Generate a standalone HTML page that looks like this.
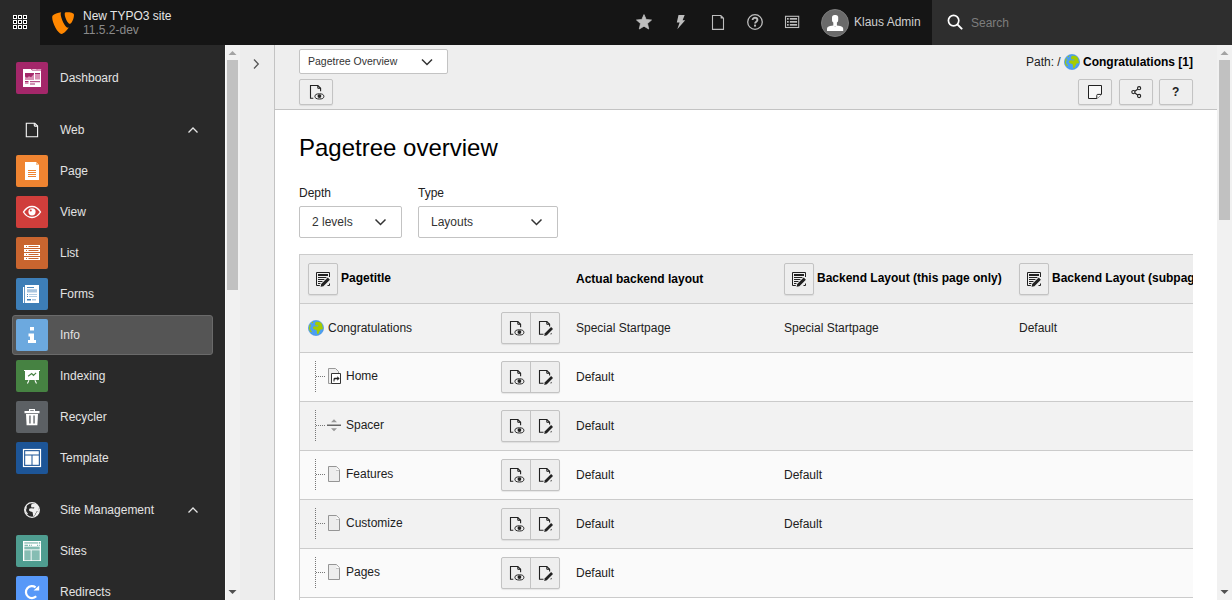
<!DOCTYPE html>
<html><head><meta charset="utf-8">
<style>
*{box-sizing:border-box;margin:0;padding:0}
html,body{width:1232px;height:600px;overflow:hidden;background:#fff}
body{font-family:"Liberation Sans",sans-serif;font-size:12px;color:#212121;position:relative}
.abs{position:absolute}
#topbar{left:0;top:0;width:1232px;height:45px;background:#151515}
#gridbtn{left:0;top:0;width:40px;height:45px;background:#292929}
#sitename{left:83px;top:9px;color:#e6e6e6;font-size:12px;line-height:15px}
#siteversion{left:83px;top:23px;color:#8a8a8a;font-size:12px;line-height:15px}
.tbicon{position:absolute;top:14px;width:16px;height:16px}
#user{left:854px;top:15px;color:#cfcfcf;font-size:12px;line-height:15px}
#avatar{left:821px;top:9px;width:28px;height:28px}
#search{left:932px;top:0;width:300px;height:45px;background:#2e2e2e}
#searchtxt{left:971px;top:16px;color:#7d7d7d;font-size:12px;line-height:15px}
#sidebar{left:0;top:45px;width:225px;height:555px;background:#292929}
.mi{position:absolute;left:16px;width:32px;height:32px;border-radius:2px}
.ml{position:absolute;left:60px;color:#e3e3e3;font-size:12px;line-height:15px}
#sbscroll{left:225px;top:45px;width:15px;height:555px;background:#f1f1f1}
#tree{left:240px;top:45px;width:35px;height:555px;background:#ededed;border-right:1px solid #c3c3c3}
#docheader{left:275px;top:45px;width:942px;height:65px;background:#eeeeee;border-bottom:1px solid #c3c3c3}
#rscroll{left:1217px;top:45px;width:15px;height:555px;background:#f1f1f1}
.btn{position:absolute;background:#eeeeee;border:1px solid #c3c3c3;border-radius:2px;box-shadow:0 1px 1px rgba(0,0,0,.08)}
.sel{position:absolute;background:#fff;border:1px solid #c3c3c3;border-radius:2px}
.seltxt{position:absolute;color:#333;line-height:15px}
#h1{left:299px;top:134px;font-size:24px;line-height:28px;color:#000}
.lbl{position:absolute;top:186px;color:#212121;font-size:12px;line-height:15px}
#table{left:299px;top:254px;width:918px;height:346px;overflow:hidden}
.row{position:absolute;left:0;width:894px;height:49px;border-top:1px solid #c8c8c8}
.cell{position:absolute;line-height:15px;white-space:nowrap}
</style></head>
<body>
<div id="topbar" class="abs"></div>
<div id="gridbtn" class="abs">
 <svg class="abs" style="left:13px;top:15px" width="14" height="14" viewBox="0 0 14 14"><rect x="0.5" y="0.5" width="3" height="3" fill="#000" stroke="#fff" stroke-width="1"/><rect x="5.5" y="0.5" width="3" height="3" fill="#000" stroke="#fff" stroke-width="1"/><rect x="10.5" y="0.5" width="3" height="3" fill="#000" stroke="#fff" stroke-width="1"/><rect x="0.5" y="5.5" width="3" height="3" fill="#000" stroke="#fff" stroke-width="1"/><rect x="5.5" y="5.5" width="3" height="3" fill="#000" stroke="#fff" stroke-width="1"/><rect x="10.5" y="5.5" width="3" height="3" fill="#000" stroke="#fff" stroke-width="1"/><rect x="0.5" y="10.5" width="3" height="3" fill="#000" stroke="#fff" stroke-width="1"/><rect x="5.5" y="10.5" width="3" height="3" fill="#000" stroke="#fff" stroke-width="1"/><rect x="10.5" y="10.5" width="3" height="3" fill="#000" stroke="#fff" stroke-width="1"/></svg>
</div>
<!-- TYPO3 logo -->
<svg class="abs" style="left:52px;top:12px" width="22" height="22" viewBox="0 0 23 23">
 <path fill="#ff8700" d="M17.5 16.3c-.3.1-.6.1-1 .1-3 0-7.4-10.5-7.4-14 0-1.3.3-1.7.7-2.1C6.1.8 2 2 .7 3.7.4 4.1.2 4.8.2 5.7c0 5.5 5.9 17.2 9.9 17.2 1.9 0 5-3.1 7.4-6.6"/>
 <path fill="#ff8700" d="M15.6.2c3.7 0 7.4.6 7.4 2.7 0 4.3-2.7 9.5-4.1 9.5-2.5 0-5.6-6.9-5.6-10.4 0-1.6.6-1.8 2.3-1.8"/>
</svg>
<div id="sitename" class="abs">New TYPO3 site</div>
<div id="siteversion" class="abs">11.5.2-dev</div>

<!-- toolbar icons -->
<svg class="abs" style="left:636px;top:14px" width="16" height="16" viewBox="0 0 16 16"><path fill="#bdbdbd" stroke="#bdbdbd" stroke-width="0.8" stroke-linejoin="round" d="M8 .6l2.2 4.9 5.3.5-4 3.6 1.2 5.4L8 12.2 3.3 15l1.2-5.4-4-3.6 5.3-.5z"/></svg>
<svg class="abs" style="left:676px;top:14px" width="10" height="16" viewBox="0 0 10 16"><path fill="#bdbdbd" d="M2.5 1h6.2L6.6 6.2h2.6L1.3 15.3 3.6 8.4H.8z"/></svg>
<svg class="abs" style="left:711px;top:14px" width="14" height="16" viewBox="0 0 14 16"><path fill="none" stroke="#bdbdbd" stroke-width="1.1" d="M1.5 1.5h8.3l2.7 2.7v11.2H1.5z"/><path fill="#bdbdbd" d="M9.6 1.2v3.2h3.2z"/></svg>
<svg class="abs" style="left:747px;top:14px" width="16" height="16" viewBox="0 0 16 16"><circle cx="8" cy="8" r="7.3" fill="none" stroke="#bdbdbd" stroke-width="1.3"/><path fill="none" stroke="#bdbdbd" stroke-width="1.9" d="M5.6 6.1c0-1.5 1.1-2.3 2.4-2.3 1.4 0 2.4.8 2.4 2.1 0 1.9-2.3 1.7-2.3 3.7"/><rect x="7.05" y="10.6" width="2" height="2" fill="#bdbdbd"/></svg>
<svg class="abs" style="left:784px;top:15px" width="16" height="14" viewBox="0 0 16 14"><rect x="1.5" y="1.3" width="13.2" height="11.2" fill="none" stroke="#bdbdbd" stroke-width="1.1"/><rect x="3" y="3" width="1.7" height="1.7" fill="#bdbdbd"/><rect x="3" y="6" width="1.7" height="1.7" fill="#bdbdbd"/><rect x="3" y="9" width="1.7" height="1.7" fill="#bdbdbd"/><rect x="5.8" y="3" width="7.3" height="1.7" fill="#bdbdbd"/><rect x="5.8" y="6" width="7.3" height="1.7" fill="#bdbdbd"/><rect x="5.8" y="9" width="7.3" height="1.7" fill="#bdbdbd"/></svg>
<div id="avatar" class="abs"><svg width="28" height="28" viewBox="0 0 28 28"><circle cx="14" cy="14" r="13.5" fill="#6a6a6a" stroke="#7c7c7c" stroke-width="1"/><rect x="11" y="6" width="6.2" height="7.6" rx="2.6" fill="#fff"/><rect x="12.3" y="12" width="3.6" height="5" fill="#fff"/><path fill="#fff" d="M6 22v-2.3c0-1.5 1.2-2.3 3-2.7l3.4-.6 1.7 1.2 1.7-1.2 3.4.6c1.8.4 3 1.2 3 2.7V22z"/></svg></div>
<div id="user" class="abs">Klaus Admin</div>
<div id="search" class="abs"></div>
<svg class="abs" style="left:947px;top:14px" width="16" height="16" viewBox="0 0 16 16"><circle cx="6.6" cy="6.6" r="5.2" fill="none" stroke="#fff" stroke-width="1.7"/><path stroke="#fff" stroke-width="2" stroke-linecap="round" d="M10.6 10.6l4 4"/></svg>
<div id="searchtxt" class="abs">Search</div>

<div id="sidebar" class="abs"></div>
<div class="mi" style="top:62px;background:#a4276a"><svg width="32" height="32" viewBox="0 0 32 32"><path fill="#fff" d="M7 7h8l1 1.5h9V25H7z"/><rect x="16.2" y="7" width="4.5" height="0.9" fill="#f3d5e4"/><rect x="21.2" y="7" width="4" height="0.9" fill="#e0a9c5"/><path fill="#a4276a" d="M9 11h9v6.5H9z"/><path fill="#d88fb4" d="M9 14.5l2 1.2 2-1.5 2 1 3-3.2v5.5H9z"/><rect x="19" y="11" width="5" height="6.5" fill="#d88fb4"/><rect x="19" y="11" width="5" height="1" fill="#a4276a"/><rect x="9" y="19" width="3.5" height="1" fill="#a4276a"/><rect x="9" y="20" width="3.5" height="2" fill="#d88fb4"/><rect x="14" y="19.2" width="10" height="1" fill="#a4276a"/><rect x="14" y="21.5" width="5" height="1" fill="#a4276a"/></svg></div><div class="ml" style="top:71px">Dashboard</div>
<svg class="abs" style="left:25px;top:122px" width="14" height="16" viewBox="0 0 14 16"><path fill="none" stroke="#fafafa" stroke-width="1.1" d="M1.3 1.3h8.5l2.8 2.8v10.6H1.3z"/><path fill="none" stroke="#fafafa" stroke-width="1.1" d="M9.3 1.3v2.2c0 .4.2.6.6.6h2.4"/></svg><div class="ml" style="top:123px">Web</div><svg class="abs" style="left:187px;top:126px" width="12" height="8" viewBox="0 0 12 8"><path fill="none" stroke="#e6e6e6" stroke-width="1.3" d="M1.5 6.5L6 2l4.5 4.5"/></svg>
<div class="mi" style="top:155px;background:#ef8431"><svg width="32" height="32" viewBox="0 0 32 32"><path fill="#fff" d="M9 7h11l3 3v15H9z"/><path fill="#f6c191" d="M20 7v3h3z"/><g fill="#ef8431"><rect x="12" y="15" width="8" height="1"/><rect x="12" y="17" width="8" height="1"/><rect x="12" y="19" width="8" height="1"/><rect x="12" y="21" width="8" height="1"/></g></svg></div><div class="ml" style="top:164px">Page</div>
<div class="mi" style="top:196px;background:#d03e3b"><svg width="32" height="32" viewBox="0 0 32 32"><path fill="none" stroke="#fff" stroke-width="1.4" d="M7.5 16c2.3-3.7 5.3-5.5 8.5-5.5s6.2 1.8 8.5 5.5c-2.3 3.7-5.3 5.5-8.5 5.5s-6.2-1.8-8.5-5.5z"/><circle cx="16" cy="15.8" r="3.6" fill="#fff"/><circle cx="14.8" cy="14.6" r="1" fill="#d03e3b"/></svg></div><div class="ml" style="top:205px">View</div>
<div class="mi" style="top:237px;background:#c9652f"><svg width="32" height="32" viewBox="0 0 32 32"><rect x="8" y="8" width="16" height="3" fill="#fff"/><rect x="10" y="9" width="1" height="1" fill="#c9652f"/><rect x="12.5" y="9" width="10" height="1" fill="#c9652f"/><rect x="8" y="12" width="16" height="3" fill="#fff"/><rect x="10" y="13" width="1" height="1" fill="#c9652f"/><rect x="12.5" y="13" width="10" height="1" fill="#c9652f"/><rect x="8" y="16" width="16" height="3" fill="#fff"/><rect x="10" y="17" width="1" height="1" fill="#c9652f"/><rect x="12.5" y="17" width="10" height="1" fill="#c9652f"/><rect x="8" y="20" width="16" height="3" fill="#fff"/><rect x="10" y="21" width="1" height="1" fill="#c9652f"/><rect x="12.5" y="21" width="10" height="1" fill="#c9652f"/></svg></div><div class="ml" style="top:246px">List</div>
<div class="mi" style="top:278px;background:#3d7eb7"><svg width="32" height="32" viewBox="0 0 32 32"><rect x="7" y="9" width="1.2" height="16" fill="#fff"/><rect x="9" y="7" width="14" height="18" fill="#fff"/><g fill="#3d7eb7"><rect x="11" y="9" width="7" height="0.9"/><rect x="11" y="11.2" width="10" height="3.3" opacity=".45"/><rect x="11" y="16" width="1" height="0.9"/><rect x="13" y="16" width="8" height="0.9" opacity=".45"/><rect x="11" y="18.1" width="1" height="0.9"/><rect x="13" y="18.1" width="8" height="0.9" opacity=".45"/><rect x="11" y="21" width="4" height="1.5"/><rect x="16" y="21" width="4" height="1.5" opacity=".45"/></g></svg></div><div class="ml" style="top:287px">Forms</div>
<div class="abs" style="left:12px;top:315px;width:201px;height:40px;background:#555;border:1px solid #6a6a6a;border-radius:3px"></div><div class="mi" style="top:319px;background:#6ca9df"><svg width="32" height="32" viewBox="0 0 32 32"><rect x="14" y="8" width="4" height="3.5" fill="#fff"/><path fill="#fff" d="M12.5 14.5h5.5v6.5h2V24h-8v-3h2v-3.5h-1.5z"/></svg></div><div class="ml" style="top:328px">Info</div>
<div class="mi" style="top:360px;background:#468242"><svg width="32" height="32" viewBox="0 0 32 32"><rect x="8" y="10" width="16" height="1" fill="#fff"/><rect x="9" y="10.5" width="14" height="9.5" fill="#fff"/><path fill="none" stroke="#468242" stroke-width="1.1" d="M12.1 16.3l3.6-2.8 1.8 1.9 2.6-2.5"/><path fill="none" stroke="#fff" stroke-width="1.1" d="M13 20.3l-1.6 3.3M18.9 20.3l1.6 3.3"/></svg></div><div class="ml" style="top:369px">Indexing</div>
<div class="mi" style="top:401px;background:#5c6064"><svg width="32" height="32" viewBox="0 0 32 32"><path fill="#fff" d="M13 8h6v2h4.5v2.3h-15V10H13zM14.2 9.2v.8h3.6v-.8z"/><path fill="#fff" d="M10 13h12l-.6 11.3H10.6z"/><rect x="13.3" y="14.5" width="1.3" height="8" fill="#5c6064"/><rect x="17.4" y="14.5" width="1.3" height="8" fill="#5c6064"/></svg></div><div class="ml" style="top:410px">Recycler</div>
<div class="mi" style="top:442px;background:#1d5597"><svg width="32" height="32" viewBox="0 0 32 32"><rect x="7.5" y="7.5" width="17" height="17" fill="none" stroke="#fff" stroke-width="1.2"/><rect x="9.2" y="9.2" width="13.6" height="3.3" fill="#fff"/><rect x="9.2" y="13.5" width="6.3" height="9.3" fill="#fff"/><rect x="16.5" y="13.5" width="6.3" height="9.3" fill="#fff"/></svg></div><div class="ml" style="top:451px">Template</div>
<svg class="abs" style="left:24px;top:502px" width="16" height="16" viewBox="0 0 16 16"><circle cx="8" cy="8" r="7.3" fill="#292929" stroke="#f0f0f0" stroke-width="1.3"/><path fill="#f0f0f0" d="M7.5 2.2C9 1.5 11.5 1.7 13 2.8l1.2 1.7.3 2.5.6 1.6-1 1-1.3-.4-1.3 2.4-1.3 2.7-1-.3-.4-2.5-.3-1.5-2-.5L5 8.5l.2-1.7 1.8-.6 3 .2.3-1.1-2.8.1L7 4z"/><path fill="#f0f0f0" d="M1.4 5l1.4-.8-.2 2.3L2 8l.5 2 1.3 1.2-.3 1.3-1.5-1L1 9z"/><path fill="#f0f0f0" d="M10 15l2.5-4.5 1.5-1.5 1.2.5-1.5 3.5z"/></svg><div class="ml" style="top:503px">Site Management</div><svg class="abs" style="left:187px;top:506px" width="12" height="8" viewBox="0 0 12 8"><path fill="none" stroke="#e6e6e6" stroke-width="1.3" d="M1.5 6.5L6 2l4.5 4.5"/></svg>
<div class="mi" style="top:535px;background:#4f9d90"><svg width="32" height="32" viewBox="0 0 32 32"><rect x="7" y="6" width="18" height="20" fill="#fff"/><rect x="8.3" y="7.5" width="14" height="0.9" fill="#4f9d90"/><rect x="23" y="7.3" width="1.2" height="1.2" fill="#4f9d90"/><rect x="8.5" y="9.8" width="3.5" height="0.9" fill="#4f9d90"/><rect x="13" y="9.8" width="1" height="0.9" fill="#4f9d90"/><rect x="14.8" y="9.8" width="1" height="0.9" fill="#4f9d90"/><rect x="21" y="9.8" width="1" height="0.9" fill="#4f9d90"/><rect x="22.8" y="9.8" width="1" height="0.9" fill="#4f9d90"/><rect x="8.3" y="11.6" width="15.4" height="2.8" fill="#86bdb3"/><rect x="8.3" y="15.3" width="6.4" height="10" fill="#86bdb3"/><rect x="15.6" y="15.3" width="8.1" height="10" fill="#86bdb3"/></svg></div><div class="ml" style="top:544px">Sites</div>
<div class="mi" style="top:576px;background:#5798f8"><svg width="32" height="32" viewBox="0 0 32 32"><path fill="none" stroke="#fff" stroke-width="2.2" d="M19.6 11.3A6 6 0 1 0 20.2 20.3"/><path fill="#fff" d="M17.6 14.6h5.6V9.4z"/></svg></div><div class="ml" style="top:585px">Redirects</div>

<div id="sbscroll" class="abs"><div class="abs" style="left:0;top:0;width:1px;height:555px;background:#f8f8f8"></div><div class="abs" style="left:2px;top:15px;width:11px;height:230px;background:#c1c1c1"></div>
<svg class="abs" style="left:3px;top:5px" width="9" height="6" viewBox="0 0 9 6"><path fill="#a3a3a3" d="M4.5 1L8.5 5h-8z"/></svg>
<svg class="abs" style="left:3px;top:544px" width="9" height="6" viewBox="0 0 9 6"><path fill="#505050" d="M.5 1h8l-4 4z"/></svg></div>
<div id="tree" class="abs"><svg class="abs" style="left:12px;top:13px" width="8" height="12" viewBox="0 0 8 12"><path fill="none" stroke="#555" stroke-width="1.3" d="M2 1.5L6.3 6 2 10.5"/></svg></div>
<div id="docheader" class="abs"></div>
<div id="rscroll" class="abs"><div class="abs" style="left:2px;top:15px;width:11px;height:160px;background:#c1c1c1"></div>
<svg class="abs" style="left:3px;top:5px" width="9" height="6" viewBox="0 0 9 6"><path fill="#a3a3a3" d="M4.5 1L8.5 5h-8z"/></svg>
<svg class="abs" style="left:3px;top:544px" width="9" height="6" viewBox="0 0 9 6"><path fill="#505050" d="M.5 1h8l-4 4z"/></svg></div>
<!-- docheader content -->
<div class="sel" style="left:299px;top:49px;width:149px;height:25px"></div>
<div class="seltxt" style="left:308px;top:54px;font-size:10.5px">Pagetree Overview</div>
<svg class="abs" style="left:421px;top:57px" width="12" height="10" viewBox="0 0 12 10"><path fill="none" stroke="#333" stroke-width="1.5" d="M1 2.5l5 5 5-5"/></svg>
<div class="btn" style="left:299px;top:79px;width:34px;height:26px"></div>
<div class="abs" style="left:309px;top:84px;width:16px;height:16px"><svg width="16" height="16" viewBox="0 0 16 16"><path fill="none" stroke="#212121" stroke-width="1.1" d="M4.3 14.3H1.5V1.5h7.3l2.8 2.8v2.9"/><path fill="none" stroke="#212121" stroke-width="1" d="M8.8 1.5v2.8h2.8"/><ellipse cx="10.4" cy="12.4" rx="4.5" ry="2.6" fill="none" stroke="#212121" stroke-width="1"/><circle cx="10.4" cy="12.1" r="1.9" fill="#212121"/></svg></div>
<div class="abs" style="left:1026px;top:55px;line-height:15px;color:#212121">Path: /</div>
<svg class="abs" style="left:1064px;top:54px" width="16" height="16" viewBox="0 0 16 16"><circle cx="8" cy="8" r="7.6" fill="#4c9ff2" stroke="#3f8ddf" stroke-width=".6"/><path fill="#a5cc00" d="M7.5 2.2C9 1.5 11.5 1.7 13 2.8l1.2 1.7.3 2.5.6 1.6-1 1-1.3-.4-1.3 2.4-1.3 2.7-1-.3-.4-2.5-.3-1.5-2-.5L5 8.5l.2-1.7 1.8-.6 3 .2.3-1.1-2.8.1L7 4z"/><path fill="#a5cc00" d="M1.4 5l1.4-.8-.2 2.3L2 8l.5 2 1.3 1.2-.3 1.3-1.5-1L1 9z"/><circle cx="4.4" cy="2.5" r=".7" fill="#a5cc00"/></svg>
<div class="abs" style="left:1083px;top:55px;line-height:15px;color:#000;font-weight:bold">Congratulations [1]</div>
<div class="btn" style="left:1078px;top:79px;width:34px;height:26px"></div>
<svg class="abs" style="left:1087px;top:84px" width="16" height="16" viewBox="0 0 16 16"><path fill="#f8f8f8" stroke="#212121" stroke-width="1" d="M1.5 1.5h13v8.5l-4.5 4.5H1.5z"/><path fill="#fff" stroke="#212121" stroke-width="1" d="M9.8 14.4v-3.1c0-.6.3-.9.9-.9h3.7"/></svg>
<div class="btn" style="left:1119px;top:79px;width:34px;height:26px"></div>
<svg class="abs" style="left:1128px;top:84px" width="16" height="16" viewBox="0 0 16 16"><circle cx="11.1" cy="4.2" r="1.6" fill="none" stroke="#212121" stroke-width="1.1"/><circle cx="5.4" cy="8.1" r="1.6" fill="none" stroke="#212121" stroke-width="1.1"/><circle cx="11.1" cy="12" r="1.6" fill="none" stroke="#212121" stroke-width="1.1"/><path stroke="#212121" stroke-width="1.1" d="M6.8 7.2l2.9-2M6.8 9l2.9 2"/></svg>
<div class="btn" style="left:1159px;top:79px;width:34px;height:26px"></div>
<div class="abs" style="left:1172px;top:85px;line-height:15px;color:#212121;font-weight:bold;font-size:12px">?</div>
<!-- module body -->
<div id="h1" class="abs">Pagetree overview</div>
<div class="lbl" style="left:299px">Depth</div>
<div class="lbl" style="left:418px">Type</div>
<div class="sel" style="left:299px;top:206px;width:103px;height:32px"></div>
<div class="seltxt" style="left:312px;top:215px;font-size:12px">2 levels</div>
<svg class="abs" style="left:374px;top:217px" width="13" height="10" viewBox="0 0 13 10"><path fill="none" stroke="#333" stroke-width="1.5" d="M1.5 2.5l5 5 5-5"/></svg>
<div class="sel" style="left:418px;top:206px;width:140px;height:32px"></div>
<div class="seltxt" style="left:431px;top:215px;font-size:12px">Layouts</div>
<svg class="abs" style="left:530px;top:217px" width="13" height="10" viewBox="0 0 13 10"><path fill="none" stroke="#333" stroke-width="1.5" d="M1.5 2.5l5 5 5-5"/></svg>
<div class="abs" style="left:299px;top:254px;width:1px;height:346px;background:#ccc"></div><div class="abs" style="left:299px;top:254px;width:894px;height:1px;background:#ccc"></div>
<div class="abs" style="left:300px;top:255px;width:893px;height:48px;background:#ededed"></div>
<div class="abs" style="left:300px;top:303px;width:893px;height:1px;background:#cbcbcb"></div>
<div class="abs" style="left:300px;top:304px;width:893px;height:48px;background:#f2f2f2"></div>
<div class="abs" style="left:300px;top:352px;width:893px;height:1px;background:#cbcbcb"></div>
<div class="abs" style="left:300px;top:353px;width:893px;height:48px;background:#fafafa"></div>
<div class="abs" style="left:300px;top:401px;width:893px;height:1px;background:#cbcbcb"></div>
<div class="abs" style="left:300px;top:402px;width:893px;height:48px;background:#f2f2f2"></div>
<div class="abs" style="left:300px;top:450px;width:893px;height:1px;background:#cbcbcb"></div>
<div class="abs" style="left:300px;top:451px;width:893px;height:48px;background:#fafafa"></div>
<div class="abs" style="left:300px;top:499px;width:893px;height:1px;background:#cbcbcb"></div>
<div class="abs" style="left:300px;top:500px;width:893px;height:48px;background:#f2f2f2"></div>
<div class="abs" style="left:300px;top:548px;width:893px;height:1px;background:#cbcbcb"></div>
<div class="abs" style="left:300px;top:549px;width:893px;height:48px;background:#fafafa"></div>
<div class="abs" style="left:300px;top:597px;width:893px;height:1px;background:#cbcbcb"></div>
<div class="btn" style="left:308px;top:263px;width:30px;height:32px;"></div><div class="abs" style="left:315px;top:271px;width:16px;height:16px"><svg width="16" height="16" viewBox="0 0 16 16"><path fill="none" stroke="#212121" stroke-width="1" d="M5 14.5H1.5V1.5h13v4.5M12.5 14.5h2v-2"/><rect x="3" y="3" width="10" height="2" fill="#212121"/><rect x="3" y="6" width="10" height="1" fill="#212121"/><rect x="3" y="8" width="9" height="1" fill="#212121"/><rect x="3" y="10" width="6" height="1" fill="#212121"/><rect x="3" y="12" width="4" height="1" fill="#212121"/><path fill="#eee" d="M12.6 5.2l3.4 3.4-7.5 7.5-4.2.9.9-4.2z"/><path fill="#212121" d="M12.8 6.6l2.1 2.1-6.5 6.5-2.8.6.6-2.8z"/></svg></div>
<div class="cell abs" style="left:341px;top:271px;font-weight:bold;color:#000">Pagetitle</div>
<div class="cell abs" style="left:576px;top:272px;font-weight:bold;color:#000">Actual backend layout</div>
<div class="btn" style="left:784px;top:263px;width:30px;height:32px;"></div><div class="abs" style="left:791px;top:271px;width:16px;height:16px"><svg width="16" height="16" viewBox="0 0 16 16"><path fill="none" stroke="#212121" stroke-width="1" d="M5 14.5H1.5V1.5h13v4.5M12.5 14.5h2v-2"/><rect x="3" y="3" width="10" height="2" fill="#212121"/><rect x="3" y="6" width="10" height="1" fill="#212121"/><rect x="3" y="8" width="9" height="1" fill="#212121"/><rect x="3" y="10" width="6" height="1" fill="#212121"/><rect x="3" y="12" width="4" height="1" fill="#212121"/><path fill="#eee" d="M12.6 5.2l3.4 3.4-7.5 7.5-4.2.9.9-4.2z"/><path fill="#212121" d="M12.8 6.6l2.1 2.1-6.5 6.5-2.8.6.6-2.8z"/></svg></div>
<div class="cell abs" style="left:817px;top:271px;font-weight:bold;color:#000">Backend Layout (this page only)</div>
<div class="btn" style="left:1019px;top:263px;width:30px;height:32px;"></div><div class="abs" style="left:1026px;top:271px;width:16px;height:16px"><svg width="16" height="16" viewBox="0 0 16 16"><path fill="none" stroke="#212121" stroke-width="1" d="M5 14.5H1.5V1.5h13v4.5M12.5 14.5h2v-2"/><rect x="3" y="3" width="10" height="2" fill="#212121"/><rect x="3" y="6" width="10" height="1" fill="#212121"/><rect x="3" y="8" width="9" height="1" fill="#212121"/><rect x="3" y="10" width="6" height="1" fill="#212121"/><rect x="3" y="12" width="4" height="1" fill="#212121"/><path fill="#eee" d="M12.6 5.2l3.4 3.4-7.5 7.5-4.2.9.9-4.2z"/><path fill="#212121" d="M12.8 6.6l2.1 2.1-6.5 6.5-2.8.6.6-2.8z"/></svg></div>
<div class="abs" style="left:1052px;top:271px;width:141px;height:16px;overflow:hidden"><div class="cell" style="font-weight:bold;color:#000">Backend Layout (subpages of this page)</div></div>
<div class="abs" style="left:308px;top:320px;width:16px;height:16px"><svg width="16" height="16" viewBox="0 0 16 16"><circle cx="8" cy="8" r="7.6" fill="#4c9ff2" stroke="#3f8ddf" stroke-width=".6"/><path fill="#a5cc00" d="M7.5 2.2C9 1.5 11.5 1.7 13 2.8l1.2 1.7.3 2.5.6 1.6-1 1-1.3-.4-1.3 2.4-1.3 2.7-1-.3-.4-2.5-.3-1.5-2-.5L5 8.5l.2-1.7 1.8-.6 3 .2.3-1.1-2.8.1L7 4z"/><path fill="#a5cc00" d="M1.4 5l1.4-.8-.2 2.3L2 8l.5 2 1.3 1.2-.3 1.3-1.5-1L1 9z"/><circle cx="4.4" cy="2.5" r=".7" fill="#a5cc00"/></svg></div>
<div class="cell abs" style="left:328px;top:321px">Congratulations</div>
<div class="btn" style="left:501px;top:312px;width:59px;height:32px"></div><div class="abs" style="left:530px;top:313px;width:1px;height:30px;background:#c3c3c3"></div>
<div class="abs" style="left:509px;top:320px;width:16px;height:16px"><svg width="16" height="16" viewBox="0 0 16 16"><path fill="none" stroke="#212121" stroke-width="1.1" d="M4.3 14.3H1.5V1.5h7.3l2.8 2.8v2.9"/><path fill="none" stroke="#212121" stroke-width="1" d="M8.8 1.5v2.8h2.8"/><ellipse cx="10.4" cy="12.4" rx="4.5" ry="2.6" fill="none" stroke="#212121" stroke-width="1"/><circle cx="10.4" cy="12.1" r="1.9" fill="#212121"/></svg></div>
<div class="abs" style="left:538px;top:320px;width:16px;height:16px"><svg width="16" height="16" viewBox="0 0 16 16"><path fill="none" stroke="#212121" stroke-width="1.1" d="M5.5 14.3H1.5V1.5h7.3l2.8 2.8v2.2"/><path fill="none" stroke="#212121" stroke-width="1" d="M8.8 1.5v2.8h2.8"/><path fill="#212121" d="M13.1 7.1l1.9 1.9-6.2 6.2-2.6.7.7-2.6z"/><path fill="#212121" d="M12 14.3h1.6v-1.6z"/></svg></div>
<div class="cell abs" style="left:576px;top:321px">Special Startpage</div>
<div class="cell abs" style="left:784px;top:321px">Special Startpage</div>
<div class="cell abs" style="left:1019px;top:321px">Default</div>
<div class="abs" style="left:315px;top:361px;width:1px;height:31px;border-left:1px dotted #777"></div>
<div class="abs" style="left:316px;top:376px;width:9px;height:1px;border-top:1px dotted #777"></div>
<div class="abs" style="left:327px;top:368px;width:16px;height:16px"><svg width="16" height="16" viewBox="0 0 16 16"><path fill="#efefef" stroke="#999" stroke-width="1" d="M1.5 .5h7l3 3v12h-10z"/><path fill="#fff" stroke="#333" stroke-width="1" d="M4.5 5.5h9v10h-9z"/><path fill="#212121" d="M6.5 13.5v-2.3c0-1 .6-1.5 1.5-1.5h2.3V8.3l2.3 2.2-2.3 2.2v-1.4H8.4c-.6 0-.9.3-.9.9v1.3z"/></svg></div>
<div class="cell abs" style="left:346px;top:369px">Home</div>
<div class="btn" style="left:501px;top:361px;width:59px;height:32px"></div><div class="abs" style="left:530px;top:362px;width:1px;height:30px;background:#c3c3c3"></div>
<div class="abs" style="left:509px;top:369px;width:16px;height:16px"><svg width="16" height="16" viewBox="0 0 16 16"><path fill="none" stroke="#212121" stroke-width="1.1" d="M4.3 14.3H1.5V1.5h7.3l2.8 2.8v2.9"/><path fill="none" stroke="#212121" stroke-width="1" d="M8.8 1.5v2.8h2.8"/><ellipse cx="10.4" cy="12.4" rx="4.5" ry="2.6" fill="none" stroke="#212121" stroke-width="1"/><circle cx="10.4" cy="12.1" r="1.9" fill="#212121"/></svg></div>
<div class="abs" style="left:538px;top:369px;width:16px;height:16px"><svg width="16" height="16" viewBox="0 0 16 16"><path fill="none" stroke="#212121" stroke-width="1.1" d="M5.5 14.3H1.5V1.5h7.3l2.8 2.8v2.2"/><path fill="none" stroke="#212121" stroke-width="1" d="M8.8 1.5v2.8h2.8"/><path fill="#212121" d="M13.1 7.1l1.9 1.9-6.2 6.2-2.6.7.7-2.6z"/><path fill="#212121" d="M12 14.3h1.6v-1.6z"/></svg></div>
<div class="cell abs" style="left:576px;top:370px">Default</div>
<div class="abs" style="left:315px;top:410px;width:1px;height:31px;border-left:1px dotted #777"></div>
<div class="abs" style="left:316px;top:425px;width:9px;height:1px;border-top:1px dotted #777"></div>
<div class="abs" style="left:326px;top:417px;width:16px;height:16px"><svg width="16" height="16" viewBox="0 0 16 16"><rect x="1" y="7.5" width="14" height="1.5" fill="#666"/><path fill="#999" d="M8 2.3l3 3H5zM8 14.2l3-3H5z"/></svg></div>
<div class="cell abs" style="left:346px;top:418px">Spacer</div>
<div class="btn" style="left:501px;top:410px;width:59px;height:32px"></div><div class="abs" style="left:530px;top:411px;width:1px;height:30px;background:#c3c3c3"></div>
<div class="abs" style="left:509px;top:418px;width:16px;height:16px"><svg width="16" height="16" viewBox="0 0 16 16"><path fill="none" stroke="#212121" stroke-width="1.1" d="M4.3 14.3H1.5V1.5h7.3l2.8 2.8v2.9"/><path fill="none" stroke="#212121" stroke-width="1" d="M8.8 1.5v2.8h2.8"/><ellipse cx="10.4" cy="12.4" rx="4.5" ry="2.6" fill="none" stroke="#212121" stroke-width="1"/><circle cx="10.4" cy="12.1" r="1.9" fill="#212121"/></svg></div>
<div class="abs" style="left:538px;top:418px;width:16px;height:16px"><svg width="16" height="16" viewBox="0 0 16 16"><path fill="none" stroke="#212121" stroke-width="1.1" d="M5.5 14.3H1.5V1.5h7.3l2.8 2.8v2.2"/><path fill="none" stroke="#212121" stroke-width="1" d="M8.8 1.5v2.8h2.8"/><path fill="#212121" d="M13.1 7.1l1.9 1.9-6.2 6.2-2.6.7.7-2.6z"/><path fill="#212121" d="M12 14.3h1.6v-1.6z"/></svg></div>
<div class="cell abs" style="left:576px;top:419px">Default</div>
<div class="abs" style="left:315px;top:459px;width:1px;height:31px;border-left:1px dotted #777"></div>
<div class="abs" style="left:316px;top:474px;width:9px;height:1px;border-top:1px dotted #777"></div>
<div class="abs" style="left:327px;top:466px;width:16px;height:16px"><svg width="16" height="16" viewBox="0 0 16 16"><path fill="#ededed" stroke="#959595" stroke-width="1" d="M1.5 .5h7.8l3.2 3.2v11.8h-11z"/><path fill="#c4c4c4" d="M9 1v4h3.5z"/><path fill="#fff" d="M9.2 .9l3.1 3.1H9.2z"/></svg></div>
<div class="cell abs" style="left:346px;top:467px">Features</div>
<div class="btn" style="left:501px;top:459px;width:59px;height:32px"></div><div class="abs" style="left:530px;top:460px;width:1px;height:30px;background:#c3c3c3"></div>
<div class="abs" style="left:509px;top:467px;width:16px;height:16px"><svg width="16" height="16" viewBox="0 0 16 16"><path fill="none" stroke="#212121" stroke-width="1.1" d="M4.3 14.3H1.5V1.5h7.3l2.8 2.8v2.9"/><path fill="none" stroke="#212121" stroke-width="1" d="M8.8 1.5v2.8h2.8"/><ellipse cx="10.4" cy="12.4" rx="4.5" ry="2.6" fill="none" stroke="#212121" stroke-width="1"/><circle cx="10.4" cy="12.1" r="1.9" fill="#212121"/></svg></div>
<div class="abs" style="left:538px;top:467px;width:16px;height:16px"><svg width="16" height="16" viewBox="0 0 16 16"><path fill="none" stroke="#212121" stroke-width="1.1" d="M5.5 14.3H1.5V1.5h7.3l2.8 2.8v2.2"/><path fill="none" stroke="#212121" stroke-width="1" d="M8.8 1.5v2.8h2.8"/><path fill="#212121" d="M13.1 7.1l1.9 1.9-6.2 6.2-2.6.7.7-2.6z"/><path fill="#212121" d="M12 14.3h1.6v-1.6z"/></svg></div>
<div class="cell abs" style="left:576px;top:468px">Default</div>
<div class="cell abs" style="left:784px;top:468px">Default</div>
<div class="abs" style="left:315px;top:508px;width:1px;height:31px;border-left:1px dotted #777"></div>
<div class="abs" style="left:316px;top:523px;width:9px;height:1px;border-top:1px dotted #777"></div>
<div class="abs" style="left:327px;top:515px;width:16px;height:16px"><svg width="16" height="16" viewBox="0 0 16 16"><path fill="#ededed" stroke="#959595" stroke-width="1" d="M1.5 .5h7.8l3.2 3.2v11.8h-11z"/><path fill="#c4c4c4" d="M9 1v4h3.5z"/><path fill="#fff" d="M9.2 .9l3.1 3.1H9.2z"/></svg></div>
<div class="cell abs" style="left:346px;top:516px">Customize</div>
<div class="btn" style="left:501px;top:508px;width:59px;height:32px"></div><div class="abs" style="left:530px;top:509px;width:1px;height:30px;background:#c3c3c3"></div>
<div class="abs" style="left:509px;top:516px;width:16px;height:16px"><svg width="16" height="16" viewBox="0 0 16 16"><path fill="none" stroke="#212121" stroke-width="1.1" d="M4.3 14.3H1.5V1.5h7.3l2.8 2.8v2.9"/><path fill="none" stroke="#212121" stroke-width="1" d="M8.8 1.5v2.8h2.8"/><ellipse cx="10.4" cy="12.4" rx="4.5" ry="2.6" fill="none" stroke="#212121" stroke-width="1"/><circle cx="10.4" cy="12.1" r="1.9" fill="#212121"/></svg></div>
<div class="abs" style="left:538px;top:516px;width:16px;height:16px"><svg width="16" height="16" viewBox="0 0 16 16"><path fill="none" stroke="#212121" stroke-width="1.1" d="M5.5 14.3H1.5V1.5h7.3l2.8 2.8v2.2"/><path fill="none" stroke="#212121" stroke-width="1" d="M8.8 1.5v2.8h2.8"/><path fill="#212121" d="M13.1 7.1l1.9 1.9-6.2 6.2-2.6.7.7-2.6z"/><path fill="#212121" d="M12 14.3h1.6v-1.6z"/></svg></div>
<div class="cell abs" style="left:576px;top:517px">Default</div>
<div class="cell abs" style="left:784px;top:517px">Default</div>
<div class="abs" style="left:315px;top:557px;width:1px;height:31px;border-left:1px dotted #777"></div>
<div class="abs" style="left:316px;top:572px;width:9px;height:1px;border-top:1px dotted #777"></div>
<div class="abs" style="left:327px;top:564px;width:16px;height:16px"><svg width="16" height="16" viewBox="0 0 16 16"><path fill="#ededed" stroke="#959595" stroke-width="1" d="M1.5 .5h7.8l3.2 3.2v11.8h-11z"/><path fill="#c4c4c4" d="M9 1v4h3.5z"/><path fill="#fff" d="M9.2 .9l3.1 3.1H9.2z"/></svg></div>
<div class="cell abs" style="left:346px;top:565px">Pages</div>
<div class="btn" style="left:501px;top:557px;width:59px;height:32px"></div><div class="abs" style="left:530px;top:558px;width:1px;height:30px;background:#c3c3c3"></div>
<div class="abs" style="left:509px;top:565px;width:16px;height:16px"><svg width="16" height="16" viewBox="0 0 16 16"><path fill="none" stroke="#212121" stroke-width="1.1" d="M4.3 14.3H1.5V1.5h7.3l2.8 2.8v2.9"/><path fill="none" stroke="#212121" stroke-width="1" d="M8.8 1.5v2.8h2.8"/><ellipse cx="10.4" cy="12.4" rx="4.5" ry="2.6" fill="none" stroke="#212121" stroke-width="1"/><circle cx="10.4" cy="12.1" r="1.9" fill="#212121"/></svg></div>
<div class="abs" style="left:538px;top:565px;width:16px;height:16px"><svg width="16" height="16" viewBox="0 0 16 16"><path fill="none" stroke="#212121" stroke-width="1.1" d="M5.5 14.3H1.5V1.5h7.3l2.8 2.8v2.2"/><path fill="none" stroke="#212121" stroke-width="1" d="M8.8 1.5v2.8h2.8"/><path fill="#212121" d="M13.1 7.1l1.9 1.9-6.2 6.2-2.6.7.7-2.6z"/><path fill="#212121" d="M12 14.3h1.6v-1.6z"/></svg></div>
<div class="cell abs" style="left:576px;top:566px">Default</div>


</body></html>
